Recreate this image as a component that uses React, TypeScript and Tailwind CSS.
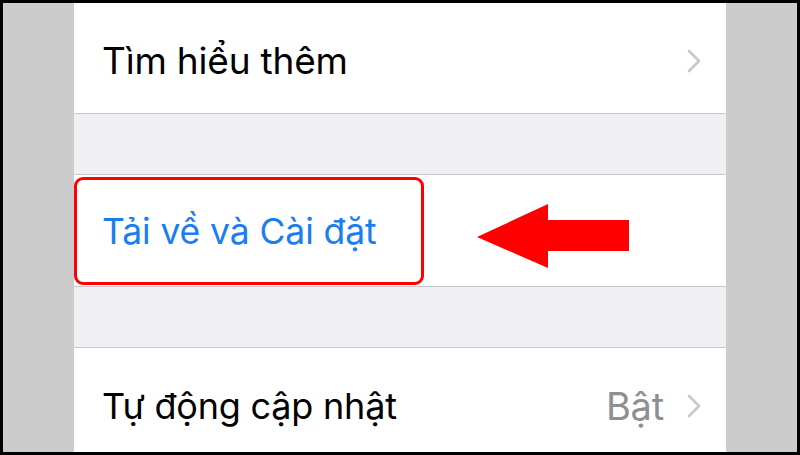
type RowProps = {
  label: string;
  value?: string;
  blue?: boolean;
  chevron?: boolean;
  className: string;
  textClass: string;
};

function Chevron() {
  return (
    <svg width="14" height="24" viewBox="0 0 14 24" className="shrink-0">
      <polyline
        points="2,2 12,12 2,22"
        fill="none"
        stroke="#c7c7cc"
        strokeWidth="2.6"
        strokeLinecap="round"
        strokeLinejoin="round"
      />
    </svg>
  );
}

function Row({ label, value, blue, chevron, className, textClass }: RowProps) {
  return (
    <div className={`flex items-center bg-white pl-[28px] pr-[25px] ${className}`}>
      <span className={`flex-1 ${textClass} ${blue ? "text-[#1a7df0]" : "text-black"}`}>
        {label}
      </span>
      {value && (
        <span className="mr-[23px] text-[38px] tracking-[-0.2px] text-[#8e8e93]">{value}</span>
      )}
      {chevron && <Chevron />}
    </div>
  );
}

function Gap() {
  return <div className="h-[62px] border-y border-[#c8c7cc] bg-[#efeff4]" />;
}

export default function App() {
  return (
    <div
      className="h-[455px] w-[800px] overflow-hidden bg-black p-[3px]"
      style={{ fontFamily: "Inter, 'Liberation Sans', sans-serif" }}
    >
      <div className="flex h-full">
        <div className="w-[71px] bg-[#cccccc]" />
        <div className="relative flex flex-1 flex-col">
          <Row
            label="Tìm hiểu thêm"
            chevron
            className="h-[110px] pt-[6px]"
            textClass="text-[37px] tracking-[-0.2px]"
          />
          <Gap />
          <Row
            label="Tải về và Cài đặt"
            blue
            className="h-[111px] pt-[2px]"
            textClass="text-[35.5px] tracking-[-0.1px]"
          />
          <Gap />
          <Row
            label="Tự động cập nhật"
            value="Bật"
            chevron
            className="flex-1 pt-[12px]"
            textClass="text-[36px] tracking-[-0.2px]"
          />

          {/* callout around the download row */}
          <div className="absolute left-0 top-[174px] h-[108px] w-[350px] rounded-[9px] border-[3px] border-[#ff0000]" />
          <svg
            className="absolute left-[403px] top-[201px]"
            width="152"
            height="64"
            viewBox="0 0 152 64"
          >
            <polygon points="0,33 71,0 71,16 152,16 152,47 71,47 71,64" fill="#ff0000" />
          </svg>
        </div>
        <div className="w-[71px] bg-[#cccccc]" />
      </div>
    </div>
  );
}
